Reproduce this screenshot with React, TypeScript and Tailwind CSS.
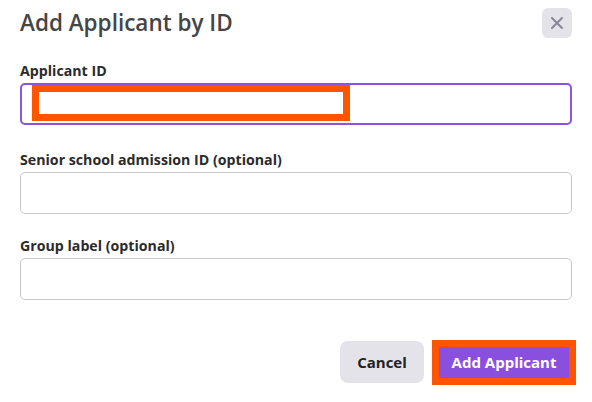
import React from "react";

const FIELDS: { label: string; mt: string; active?: boolean }[] = [
  { label: "Applicant ID", mt: "mt-[23px]", active: true },
  { label: "Senior school admission ID (optional)", mt: "mt-[25px]" },
  { label: "Group label (optional)", mt: "mt-[22px]" },
];

function Field({ label, mt, active }: { label: string; mt: string; active?: boolean }) {
  return (
    <div className={mt}>
      <label className="block text-[14.2px] leading-[20px] font-bold text-[#2b2b2b]">{label}</label>
      <div className="relative mt-[2px]">
        <input
          type="text"
          className={`block w-full h-[42px] rounded-[5px] bg-white px-3 text-[15px] outline-none ${
            active ? "border-2 border-[#8c52e0]" : "border border-[#c8c8c8]"
          }`}
        />
        {active && (
          <div className="absolute left-[12px] top-[2px] w-[318px] h-[36px] border-[7px] border-[#ff5500] pointer-events-none" />
        )}
      </div>
    </div>
  );
}

export default function App() {
  return (
    <div className="w-[592px] h-[402px] bg-white px-5 pt-2 font-['Open_Sans',sans-serif] text-[#2b2b2b]">
      <div className="flex h-[30px] items-center justify-between">
        <h2 className="text-[22.5px] leading-[30px] font-semibold text-[#454545]">Add Applicant by ID</h2>
        <button
          type="button"
          className="flex h-[30px] w-[30px] items-center justify-center rounded-[6px] bg-[#e4e3ea]"
        >
          <svg width="14" height="14" viewBox="0 0 14 14" fill="none" stroke="#8a8595" strokeWidth="2" strokeLinecap="round">
            <path d="M2 2L12 12M12 2L2 12" />
          </svg>
        </button>
      </div>

      {FIELDS.map((f) => (
        <Field key={f.label} {...f} />
      ))}

      <div className="mt-[41px] flex justify-end gap-3">
        <button
          type="button"
          className="h-[42px] w-[84px] rounded-[8px] bg-[#e4e3ea] text-[15px] font-bold text-[#222]"
        >
          Cancel
        </button>
        <div className="relative">
          <button
            type="button"
            className="h-[42px] w-[136px] rounded-[8px] bg-[#8b4fe0] text-[15px] font-bold text-white"
          >
            Add Applicant
          </button>
          <div className="absolute left-[-4px] top-[-1px] w-[144px] h-[45px] border-[7px] border-[#ff5500] pointer-events-none" />
        </div>
      </div>
    </div>
  );
}
